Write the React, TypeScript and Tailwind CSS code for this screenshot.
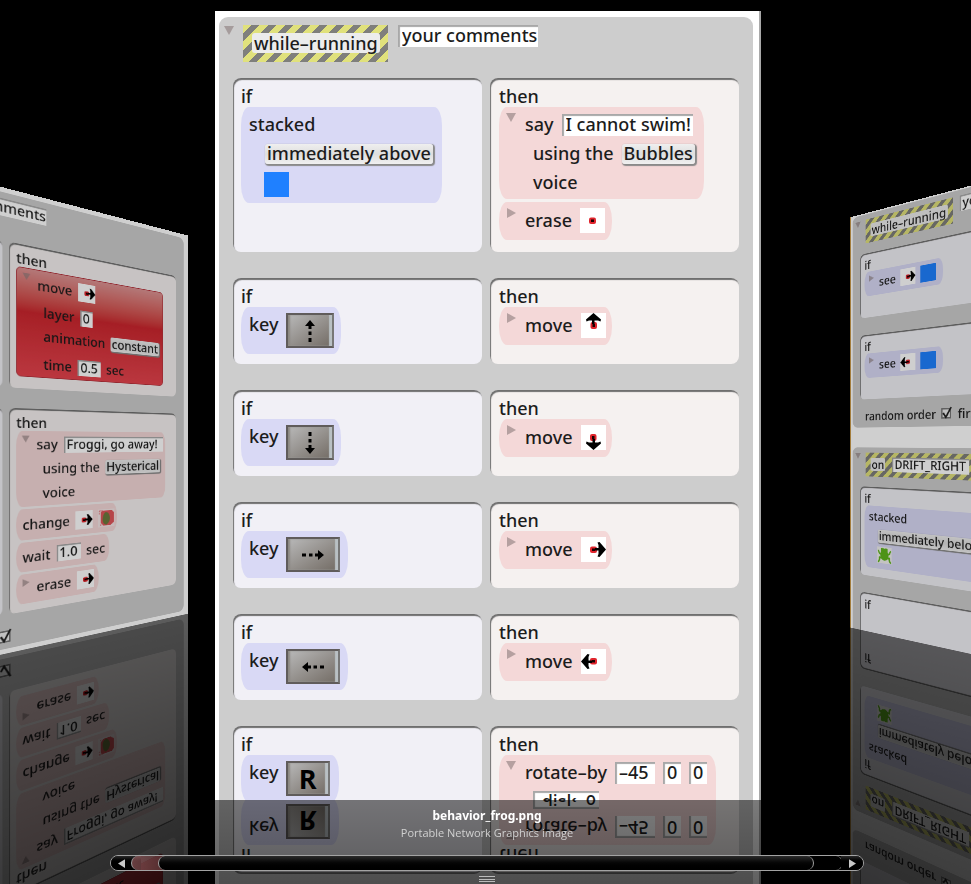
import { useId } from "react";
import type { ReactNode } from "react";

type Tone = "if" | "then" | "hot";
type Direction = "up" | "down" | "left" | "right" | "none";

function Disclosure({ open }: { open?: boolean }) {
  return (
    <svg viewBox="0 0 10 10" className="h-[10px] w-[10px] shrink-0 fill-[#8c7c7c] opacity-60" aria-hidden="true">
      {open ? <path d="M0 1h10L5 10z" /> : <path d="M1 0v10l9-5z" />}
    </svg>
  );
}

function DotIcon({ direction }: { direction: Direction }) {
  const turn = { right: 0, down: 90, left: 180, up: 270, none: 0 }[direction];
  return (
    <svg viewBox="0 0 25 25" className="h-[25px] w-[25px] shrink-0 bg-white" aria-hidden="true">
      <g transform={`rotate(${turn} 12.5 12.5)`}>
        <rect x="9" y="9.5" width="7" height="6.5" rx="2" fill="#e0242c" />
        <rect x="11" y="11.5" width="3" height="2.5" fill="#1a0000" />
        {direction !== "none" && (
          <path d="M14 11h3.500V8l-1-2.500 2-.5 6.500 7.500-6.500 7.500-2-.5 1-2.500v-3.500H14z" fill="#000" />
        )}
      </g>
    </svg>
  );
}

function BlueTile() {
  return <span className="h-[25px] w-[25px] shrink-0 bg-[#1f80ff]" />;
}

function FrogIcon() {
  return (
    <svg viewBox="0 0 25 25" className="h-[25px] w-[25px] bg-[#f1f1ee]" aria-hidden="true">
      <g fill="#5fb51e" stroke="#5fb51e" strokeWidth="2.500" strokeLinecap="round" strokeLinejoin="round">
        <ellipse cx="12.500" cy="12.500" rx="6" ry="7" />
        <path d="M8 3h3l1.500 2L14 3h3v5H8z" />
        <path d="M8 11L4 10 2 6M17 11l4-1 2-4M8 17l-4-1v4l-2 3M17 17l4-1v4l2 3" fill="none" />
      </g>
    </svg>
  );
}

function LeafIcon() {
  return (
    <svg viewBox="0 0 25 25" className="h-[25px] w-[25px] bg-[#f3e6e6]" aria-hidden="true">
      <path d="M4 4l3-2h14l3 3v14l-5 4H8l-4-4z" fill="#e0555a" />
      <path d="M12 4c6 1 7 9 5 14l-4 4c-4 0-7-4-6-10 1-4 2-7 5-8z" fill="#6d7a3d" />
      <path d="M2 2h6M2 2v6M3 22h3" stroke="#e0555a" strokeDasharray="2 1" />
    </svg>
  );
}

function Field({ value, label, className }: { value: string; label: string; className: string }) {
  return (
    <input
      aria-label={label}
      defaultValue={value}
      className={`h-[22px] bg-white pb-[2px] pl-[4px] leading-[20px] shadow-[inset_2px_2px_1px_#a8a8a8] outline-none ${className}`}
    />
  );
}

function Popup({ children, className = "" }: { children: ReactNode; className?: string }) {
  return (
    <button
      type="button"
      className={`h-[20px] rounded-[3px] bg-linear-to-b from-[#efefef] via-[#dedede] to-[#f0f0f0] px-[2px] leading-[19px] whitespace-nowrap shadow-[1px_1px_1px_1px_#8a8a8a] ${className}`}
    >
      {children}
    </button>
  );
}

function Keycap({ direction, letter }: { direction?: Direction; letter?: string }) {
  const wide = direction === "left" || direction === "right";
  const turn = { right: 90, down: 180, left: 270, up: 0, none: 0 }[direction ?? "none"];
  return (
    <button
      type="button"
      aria-label={`${letter ?? direction} key`}
      className={`flex h-[35px] items-center justify-center border-2 border-[#605c5b] border-r-[#777] bg-linear-to-br from-[#b9b9b9] to-[#736c65] font-['Open_Sans','Noto_Sans',sans-serif] text-[27px] leading-[30px] font-bold text-black shadow-[inset_-3px_0_1px_#b9c0c4,inset_2px_0_2px_#8b8781] ${letter ? "w-[44px]" : wide ? "w-[54px]" : "w-[48px]"}`}
    >
      {letter ?? (
        <svg viewBox="0 0 24 24" className="h-[24px] w-[24px]" aria-hidden="true">
          <g transform={`rotate(${turn} 12 12)`}>
            <path d="M12 1l5 6h-3.500v3h-3V7H7z" />
            <path d="M10.500 12.500h3V16h-3zM10.500 19h3v4h-3z" />
          </g>
        </svg>
      )}
    </button>
  );
}

function Block({ tone, children, className }: { tone: Tone; children: ReactNode; className: string }) {
  const tones = {
    if: "rounded-[8px/18px] bg-[#d9d9f5]",
    then: "rounded-[8px/18px] bg-[#f4d8d8]",
    hot: "rounded-[6px] border border-[#b3303a] bg-linear-to-b from-[#dd9494] via-[#cc262e] via-40% to-[#e6444e]",
  };
  return <div className={`${tones[tone]} ${className}`}>{children}</div>;
}

function Panel({ kind, children, className }: { kind: "if" | "then"; children?: ReactNode; className: string }) {
  return (
    <section
      className={`flex flex-col items-start gap-[3px] rounded-[8px] pt-[7px] shadow-[inset_1px_2px_1px_#6f6f6f] ${kind === "if" ? "bg-[#f1f0f6] pl-[8px]" : "bg-[#f5f1f0] pl-[9px]"} ${className}`}
    >
      <h3 className="-mb-[3px] h-[22px] leading-[22px]">{kind}</h3>
      {children}
    </section>
  );
}

function Rule({ children }: { children: ReactNode }) {
  return <div className="grid grid-cols-2 gap-2 px-[14px]">{children}</div>;
}

function Line({ children, className = "" }: { children: ReactNode; className?: string }) {
  return <div className={`flex h-[29px] items-center gap-2 whitespace-nowrap ${className}`}>{children}</div>;
}

function ActionRow({ label, children, className = "w-[113px]", tone = "then" }: { label: string; children: ReactNode; className?: string; tone?: Tone }) {
  return (
    <Block tone={tone} className={`flex h-[38px] pl-[7px] ${className}`}>
      <div className="pt-[6px]">
        <Disclosure />
      </div>
      <div className="flex items-center gap-[8px] pb-[2px] pl-[9px]">
        {label}
        {children}
      </div>
    </Block>
  );
}

function KeyRow({ className, children }: { className: string; children: ReactNode }) {
  return (
    <Block tone="if" className={`flex h-[47px] gap-[7px] pt-[6px] pl-2 ${className}`}>
      <span className="leading-[23px]">key</span>
      {children}
    </Block>
  );
}

function SayBlock({ phrase, voice, className, fieldClass }: { phrase: string; voice: string; className: string; fieldClass: string }) {
  return (
    <Block tone="then" className={`flex pl-[7px] ${className}`}>
      <div className="pt-[5px]">
        <Disclosure open />
      </div>
      <div className="flex flex-col justify-between pt-[3px] pb-[2px] pl-[9px]">
        <Line>
          say <Field label="phrase" value={phrase} className={fieldClass} />
        </Line>
        <Line className="pl-2">
          using the <Popup>{voice}</Popup>
        </Line>
        <Line className="pl-2">voice</Line>
      </div>
    </Block>
  );
}

function Header({ children, wide }: { children: ReactNode; wide?: boolean }) {
  return (
    <header className="flex items-start gap-[10px] pt-2 pb-4 pl-[5px]">
      <Disclosure open />
      <div
        className={`-ml-px flex h-[37px] items-center gap-3 bg-[repeating-linear-gradient(135deg,#e0e17c_0px,#e0e17c_6px,#7f7f7c_6px,#7f7f7c_12px)] px-[9px] pb-[2px] ${wide ? "w-[190px]" : "w-[145px]"}`}
      >
        {children}
      </div>
      {!wide && <Field label="comments" value="your comments" className="w-[140px]" />}
    </header>
  );
}

function Trigger({ children }: { children: ReactNode }) {
  return (
    <button type="button" className="h-[20px] rounded-[3px] bg-[#ececec] px-[2px] leading-[18px] whitespace-nowrap">
      {children}
    </button>
  );
}

function Method({ children, className = "" }: { children: ReactNode; className?: string }) {
  return <article className={`rounded-[9px] bg-[#cdcdcd] ${className}`}>{children}</article>;
}

function Tick({ label }: { label: string }) {
  const id = useId();
  return (
    <span className="flex items-center gap-2">
      <label htmlFor={id}>{label}</label>
      <span className="grid">
        <input id={id} type="checkbox" defaultChecked className="col-start-1 row-start-1 h-[15px] w-[15px] appearance-none border-2 border-[#777] bg-[#eee]" />
        <svg viewBox="0 0 16 16" className="pointer-events-none col-start-1 row-start-1 h-[16px] w-[16px] overflow-visible" aria-hidden="true">
          <path d="M3 7l4 6L15-1" fill="none" stroke="#222" strokeWidth="2.500" />
        </svg>
      </span>
    </span>
  );
}

function FrogCard() {
  const moves: Direction[] = ["up", "down", "right", "left"];
  return (
    <div className="h-[789px] overflow-hidden border-r-2 border-[#a9a9a9] bg-white pt-[6px] pr-[6px] pl-[4px]">
      <Method className="h-[900px]">
        <Header>
          <Trigger>while–running</Trigger>
        </Header>
        <div className="flex flex-col gap-[26px]">
          <Rule>
            <Panel kind="if" className="h-[174px]">
              <Block tone="if" className="h-[96px] w-[201px] pt-[3px] pl-2">
                <Line>stacked</Line>
                <Line className="pl-4">
                  <Popup>immediately above</Popup>
                </Line>
                <Line className="h-[32px] pl-[15px]">
                  <BlueTile />
                </Line>
              </Block>
            </Panel>
            <Panel kind="then" className="h-[174px]">
              <SayBlock phrase="I cannot swim!" voice="Bubbles" className="h-[92px] w-[205px]" fieldClass="w-[131px]" />
              <ActionRow label="erase">
                <DotIcon direction="none" />
              </ActionRow>
            </Panel>
          </Rule>
          {moves.map((direction) => (
            <Rule key={direction}>
              <Panel kind="if" className="h-[86px]">
                <KeyRow className={direction === "left" || direction === "right" ? "w-[107px]" : "w-[100px]"}>
                  <Keycap direction={direction} />
                </KeyRow>
              </Panel>
              <Panel kind="then" className="h-[86px]">
                <ActionRow label="move">
                  <DotIcon direction={direction} />
                </ActionRow>
              </Panel>
            </Rule>
          ))}
          <Rule>
            <Panel kind="if" className="h-[140px]">
              <KeyRow className="w-[98px]">
                <Keycap letter="R" />
              </KeyRow>
            </Panel>
            <Panel kind="then" className="h-[140px]">
              <Block tone="then" className="flex h-[100px] w-[217px] pl-[7px]">
                <div className="pt-[5px]">
                  <Disclosure open />
                </div>
                <div className="pt-[3px] pl-[9px]">
                  <Line>
                    rotate–by
                    <Field label="x angle" value="–45" className="w-[40px]" />
                    <Field label="y angle" value="0" className="w-[18px]" />
                    <Field label="z angle" value="0" className="w-[18px]" />
                  </Line>
                  <Line className="pl-2">
                    <Field label="unit" value=" disk  0" className="w-[66px]" />
                  </Line>
                </div>
              </Block>
            </Panel>
          </Rule>
        </div>
      </Method>
    </div>
  );
}

function VoiceCard() {
  return (
    <div className="h-[589px] bg-white pt-[6px] pr-[8px] pb-[6px] pl-[4px]">
      <Method className="h-full">
        <Header>
          <Trigger>while–running</Trigger>
        </Header>
        <div className="flex flex-col gap-[26px]">
          <Rule>
            <Panel kind="if" className="h-[185px]" />
            <Panel kind="then" className="h-[185px]">
              <Block tone="hot" className="flex h-[141px] w-[217px] pl-[7px]">
                <div className="pt-[5px]">
                  <Disclosure open />
                </div>
                <div className="pt-[5px] pl-[9px]">
                  <Line className="mb-[6px]">
                    move <DotIcon direction="right" />
                  </Line>
                  <Line className="mb-[2px] pl-2">
                    layer <Field label="layer" value="0" className="w-[18px]" />
                  </Line>
                  <Line className="mb-[8px] pl-2">
                    animation <Popup>constant</Popup>
                  </Line>
                  <Line className="pl-2">
                    time <Field label="time" value="0.5" className="w-[34px]" /> sec
                  </Line>
                </div>
              </Block>
            </Panel>
          </Rule>
          <Rule>
            <Panel kind="if" className="h-[262px]" />
            <Panel kind="then" className="h-[262px]">
              <SayBlock phrase="Froggi, go away!" voice="Hysterical" className="h-[98px] w-[221px]" fieldClass="w-[154px]" />
              <Block tone="then" className="flex h-[40px] w-[141px] items-center gap-2 pl-2">
                change <DotIcon direction="right" /> <LeafIcon />
              </Block>
              <Block tone="then" className="flex h-[38px] w-[129px] items-center gap-2 pl-2">
                wait <Field label="delay" value="1.0" className="w-[34px]" /> sec
              </Block>
              <ActionRow label="erase">
                <DotIcon direction="right" />
              </ActionRow>
            </Panel>
          </Rule>
        </div>
        <div className="flex h-[40px] items-center pt-[16px] pl-[250px]">
          <Tick label="" />
        </div>
      </Method>
    </div>
  );
}

function DriftCard() {
  const sights: Direction[] = ["right", "left"];
  return (
    <div className="flex h-[651px] flex-col gap-[31px] overflow-hidden border-l-[2px] border-[#c99b4a] bg-white pt-[2px] pr-[8px] pl-[3px]">
      <Method>
        <Header>
          <Trigger>while–running</Trigger>
        </Header>
        <div className="flex flex-col gap-[27px]">
          {sights.map((direction) => (
            <Rule key={direction}>
              <Panel kind="if" className="h-[100px]">
                <ActionRow tone="if" label="see" className="w-[132px]">
                  <DotIcon direction={direction} />
                  <BlueTile />
                </ActionRow>
              </Panel>
              <Panel kind="then" className="h-[100px]" />
            </Rule>
          ))}
        </div>
        <div className="flex h-[44px] items-center gap-[9px] pt-[8px] pl-[23px]">
          <Tick label="random order" />
          first
        </div>
      </Method>
      <Method className="h-[400px] shrink-0">
        <Header wide>
          <Trigger>on</Trigger>
          <Field label="message" value="DRIFT_RIGHT" className="w-[122px]" />
        </Header>
        <div className="flex flex-col gap-[27px]">
          <Rule>
            <Panel kind="if" className="h-[138px]">
              <Block tone="if" className="h-[96px] w-[210px] pt-[2px] pl-2">
                <Line>stacked</Line>
                <Line className="pl-4">
                  <Popup>immediately below</Popup>
                </Line>
                <Line className="pl-[15px]">
                  <FrogIcon />
                </Line>
              </Block>
            </Panel>
            <Panel kind="then" className="h-[138px]" />
          </Rule>
          <Rule>
            <Panel kind="if" className="h-[138px]" />
            <Panel kind="then" className="h-[138px]" />
          </Rule>
        </div>
      </Method>
    </div>
  );
}

/* A cover and its reflection on the glossy floor, both lying in one plane. */
function Cover({ children, className, shade, floor }: { children: ReactNode; className: string; shade: string; floor: string }) {
  return (
    <div className={`w-[546px] shrink-0 ${className}`}>
      <div className="grid">
        <div className="col-start-1 row-start-1">{children}</div>
        <div className={`pointer-events-none z-10 col-start-1 row-start-1 ${shade}`} />
      </div>
      <div className="grid" aria-hidden="true" inert>
        <div className="col-start-1 row-start-1 -scale-y-100">{children}</div>
        <div className={`z-10 col-start-1 row-start-1 ${floor}`} />
      </div>
    </div>
  );
}

function ScrollBar() {
  return (
    <div className="flex h-[16px] rounded-full border border-[#a3a3a3] bg-black/50">
      <button type="button" aria-label="Previous" className="flex w-[30px] shrink-0 items-center rounded-l-full bg-linear-to-b from-[#2a2a2a] to-black to-50% pl-[7px]">
        <svg viewBox="0 0 8 10" className="h-[9px] w-[7px] fill-[#c8c8c8]" aria-hidden="true">
          <path d="M8 0v10L0 5z" />
        </svg>
      </button>
      <div className="-ml-[10px] flex grow rounded-full border-x border-[#a3a3a3] bg-linear-to-r from-[#d07c80]/50 to-transparent to-[90px] pr-[28px] pl-[26px]">
        <div
          role="scrollbar"
          aria-label="Covers"
          aria-controls="covers"
          aria-valuenow={4}
          tabIndex={0}
          className="grow rounded-full border-x border-[#a3a3a3] bg-linear-to-b from-[#2c2c2c] via-[#080808] via-45% to-black"
        />
      </div>
      <button type="button" aria-label="Next" className="-ml-[2px] flex w-[22px] shrink-0 items-center justify-center rounded-r-full bg-linear-to-b from-[#2a2a2a] to-black to-50%">
        <svg viewBox="0 0 8 10" className="h-[9px] w-[7px] fill-[#c8c8c8]" aria-hidden="true">
          <path d="M0 0v10l8-5z" />
        </svg>
      </button>
    </div>
  );
}

export default function App() {
  return (
    <main className="relative h-screen overflow-hidden bg-black font-['Noto_Sans','Open_Sans',sans-serif] text-[18px] font-medium text-[#1c1c1c]">
      <div id="covers" className="flex h-full items-start pl-[5px]">
        <div className="flex min-w-0 flex-1 justify-end">
          <Cover
            className="mt-[121px] mr-[27px] origin-[100%_320px] [transform:perspective(512px)_rotateY(33deg)_scale(0.642)]"
            shade="bg-black/19"
            floor="bg-linear-to-b from-black/64 to-black/88"
          >
            <VoiceCard />
          </Cover>
        </div>
        <Cover className="z-10 mt-[11px]" shade="bg-transparent" floor="bg-linear-to-b from-black/52 to-black to-[400px]">
          <FrogCard />
        </Cover>
        <div className="flex min-w-0 flex-1">
          <Cover
            className="mt-[86px] ml-[89px] origin-[0_355px] [transform:perspective(553px)_rotateY(-33deg)_scale(0.63)]"
            shade="bg-black/19"
            floor="bg-linear-to-b from-black/64 to-black/88"
          >
            <DriftCard />
          </Cover>
        </div>
      </div>
      <footer className="absolute inset-x-0 bottom-0 z-20 flex flex-col pr-[107px] pl-[110px]">
        <div className="self-center text-center">
          <p className="text-[12px] leading-[18px] font-bold text-white">behavior_frog.png</p>
          <p className="font-['Open_Sans','Noto_Sans',sans-serif] text-[11px] leading-[16px] text-[#d0d0d0]">Portable Network Graphics image</p>
        </div>
        <div className="pt-[14px]">
          <ScrollBar />
        </div>
        <button type="button" aria-label="Resize" className="mt-[5px] mb-[2px] flex h-[6px] w-[16px] flex-col justify-between self-center">
          <span className="h-px w-full bg-[#bbb]" />
          <span className="h-px w-full bg-[#bbb]" />
          <span className="h-px w-full bg-[#bbb]" />
        </button>
      </footer>
    </main>
  );
}
